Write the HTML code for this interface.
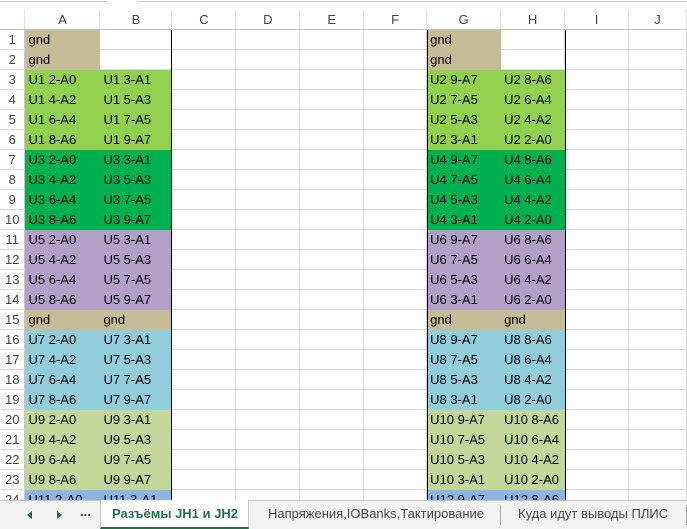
<!DOCTYPE html>
<html><head><meta charset="utf-8"><style>
*{margin:0;padding:0}
body{width:687px;height:528px;overflow:hidden;background:#fff;position:relative;font-family:"Liberation Sans","Noto Sans CJK SC",sans-serif;font-size:13px;color:#000}
table{position:absolute;top:10px;left:0;border-collapse:collapse;table-layout:fixed}
td{height:19px;border-right:1px solid #d9d9d9;border-bottom:1px solid #d9d9d9;padding:0 0 0 3px;white-space:nowrap;overflow:hidden;line-height:19px}
tr.h td{text-align:center;color:#444;padding:0;border-bottom:1px solid #c6c6c6;border-right:1px solid #e0e0e0}
td.n{text-align:center;padding:0;color:#444;border-right:1px solid #c6c6c6}
.t{background:#c4bd97;border-color:#c4bd97}
.lg{background:#92d050;border-color:#92d050}
.g{background:#00b050;border-color:#00b050}
.p{background:#b1a0c7;border-color:#b1a0c7}
.b{background:#92cddc;border-color:#92cddc}
.o{background:#c4d79b;border-color:#c4d79b}
.bb{background:#8db4e2;border-color:#8db4e2}
.vb{position:absolute;width:1px;background:#000}
.tabs{position:absolute;top:500px;left:0;width:687px;height:28px;background:#f3f3f3;border-top:1px solid #c6c6c6;color:#444}
.tabs span{position:absolute;top:5px}
.top{position:absolute;top:0;left:0;width:687px;height:10px;background:#fff}
</style></head><body>
<div class="top"><div style="position:absolute;top:1px;left:0;width:107px;height:1px;background:#c8c8c8"></div><div style="position:absolute;top:1px;left:137px;width:550px;height:1px;background:#c8c8c8"></div></div>
<table>
<colgroup><col style="width:25px"><col style="width:75px"><col style="width:72px"><col style="width:64px"><col style="width:64px"><col style="width:64px"><col style="width:63px"><col style="width:74px"><col style="width:64px"><col style="width:64px"><col style="width:58px"></colgroup>
<tr class="h"><td style="background:#fff"></td><td>A</td><td>B</td><td>C</td><td>D</td><td>E</td><td>F</td><td>G</td><td>H</td><td>I</td><td>J</td></tr>
<tr><td class="n">1</td><td class="t">gnd</td><td></td><td></td><td></td><td></td><td></td><td class="t">gnd</td><td></td><td></td><td></td></tr>
<tr><td class="n">2</td><td class="t">gnd</td><td></td><td></td><td></td><td></td><td></td><td class="t">gnd</td><td></td><td></td><td></td></tr>
<tr><td class="n">3</td><td class="lg">U1 2-A0</td><td class="lg">U1 3-A1</td><td></td><td></td><td></td><td></td><td class="lg">U2 9-A7</td><td class="lg">U2 8-A6</td><td></td><td></td></tr>
<tr><td class="n">4</td><td class="lg">U1 4-A2</td><td class="lg">U1 5-A3</td><td></td><td></td><td></td><td></td><td class="lg">U2 7-A5</td><td class="lg">U2 6-A4</td><td></td><td></td></tr>
<tr><td class="n">5</td><td class="lg">U1 6-A4</td><td class="lg">U1 7-A5</td><td></td><td></td><td></td><td></td><td class="lg">U2 5-A3</td><td class="lg">U2 4-A2</td><td></td><td></td></tr>
<tr><td class="n">6</td><td class="lg">U1 8-A6</td><td class="lg">U1 9-A7</td><td></td><td></td><td></td><td></td><td class="lg">U2 3-A1</td><td class="lg">U2 2-A0</td><td></td><td></td></tr>
<tr><td class="n">7</td><td class="g">U3 2-A0</td><td class="g">U3 3-A1</td><td></td><td></td><td></td><td></td><td class="g">U4 9-A7</td><td class="g">U4 8-A6</td><td></td><td></td></tr>
<tr><td class="n">8</td><td class="g">U3 4-A2</td><td class="g">U3 5-A3</td><td></td><td></td><td></td><td></td><td class="g">U4 7-A5</td><td class="g">U4 6-A4</td><td></td><td></td></tr>
<tr><td class="n">9</td><td class="g">U3 6-A4</td><td class="g">U3 7-A5</td><td></td><td></td><td></td><td></td><td class="g">U4 5-A3</td><td class="g">U4 4-A2</td><td></td><td></td></tr>
<tr><td class="n">10</td><td class="g">U3 8-A6</td><td class="g">U3 9-A7</td><td></td><td></td><td></td><td></td><td class="g">U4 3-A1</td><td class="g">U4 2-A0</td><td></td><td></td></tr>
<tr><td class="n">11</td><td class="p">U5 2-A0</td><td class="p">U5 3-A1</td><td></td><td></td><td></td><td></td><td class="p">U6 9-A7</td><td class="p">U6 8-A6</td><td></td><td></td></tr>
<tr><td class="n">12</td><td class="p">U5 4-A2</td><td class="p">U5 5-A3</td><td></td><td></td><td></td><td></td><td class="p">U6 7-A5</td><td class="p">U6 6-A4</td><td></td><td></td></tr>
<tr><td class="n">13</td><td class="p">U5 6-A4</td><td class="p">U5 7-A5</td><td></td><td></td><td></td><td></td><td class="p">U6 5-A3</td><td class="p">U6 4-A2</td><td></td><td></td></tr>
<tr><td class="n">14</td><td class="p">U5 8-A6</td><td class="p">U5 9-A7</td><td></td><td></td><td></td><td></td><td class="p">U6 3-A1</td><td class="p">U6 2-A0</td><td></td><td></td></tr>
<tr><td class="n">15</td><td class="t">gnd</td><td class="t">gnd</td><td></td><td></td><td></td><td></td><td class="t">gnd</td><td class="t">gnd</td><td></td><td></td></tr>
<tr><td class="n">16</td><td class="b">U7 2-A0</td><td class="b">U7 3-A1</td><td></td><td></td><td></td><td></td><td class="b">U8 9-A7</td><td class="b">U8 8-A6</td><td></td><td></td></tr>
<tr><td class="n">17</td><td class="b">U7 4-A2</td><td class="b">U7 5-A3</td><td></td><td></td><td></td><td></td><td class="b">U8 7-A5</td><td class="b">U8 6-A4</td><td></td><td></td></tr>
<tr><td class="n">18</td><td class="b">U7 6-A4</td><td class="b">U7 7-A5</td><td></td><td></td><td></td><td></td><td class="b">U8 5-A3</td><td class="b">U8 4-A2</td><td></td><td></td></tr>
<tr><td class="n">19</td><td class="b">U7 8-A6</td><td class="b">U7 9-A7</td><td></td><td></td><td></td><td></td><td class="b">U8 3-A1</td><td class="b">U8 2-A0</td><td></td><td></td></tr>
<tr><td class="n">20</td><td class="o">U9 2-A0</td><td class="o">U9 3-A1</td><td></td><td></td><td></td><td></td><td class="o">U10 9-A7</td><td class="o">U10 8-A6</td><td></td><td></td></tr>
<tr><td class="n">21</td><td class="o">U9 4-A2</td><td class="o">U9 5-A3</td><td></td><td></td><td></td><td></td><td class="o">U10 7-A5</td><td class="o">U10 6-A4</td><td></td><td></td></tr>
<tr><td class="n">22</td><td class="o">U9 6-A4</td><td class="o">U9 7-A5</td><td></td><td></td><td></td><td></td><td class="o">U10 5-A3</td><td class="o">U10 4-A2</td><td></td><td></td></tr>
<tr><td class="n">23</td><td class="o">U9 8-A6</td><td class="o">U9 9-A7</td><td></td><td></td><td></td><td></td><td class="o">U10 3-A1</td><td class="o">U10 2-A0</td><td></td><td></td></tr>
<tr><td class="n">24</td><td class="bb">U11 2-A0</td><td class="bb">U11 3-A1</td><td></td><td></td><td></td><td></td><td class="bb">U12 9-A7</td><td class="bb">U12 8-A6</td><td></td><td></td></tr>
</table>
<div class="vb" style="left:171px;top:30px;height:470px"></div>
<div class="vb" style="left:427px;top:30px;height:470px"></div>
<div class="vb" style="left:565px;top:30px;height:470px"></div>
<div class="tabs">
<svg style="position:absolute;left:26px;top:9px" width="8" height="10"><path d="M6 1 L1 5 L6 9 Z" fill="#217346"/></svg>
<svg style="position:absolute;left:55px;top:9px" width="8" height="10"><path d="M2 1 L7 5 L2 9 Z" fill="#217346"/></svg>
<span style="left:80px;top:3px;font-weight:bold;color:#333">...</span>
<div style="position:absolute;left:100px;top:-1px;width:147px;height:27px;background:#fff;border-left:1px solid #c6c6c6;border-right:1px solid #c6c6c6;border-bottom:2px solid #217346"></div>
<span style="left:112px;font-weight:bold;color:#217346">Разъёмы JH1 и JH2</span>
<span style="left:268px">Напряжения,IOBanks,Тактирование</span>
<div style="position:absolute;left:500px;top:4px;width:1px;height:20px;background:#aaa"></div>
<span style="left:518px">Куда идут выводы ПЛИС</span>
<div style="position:absolute;left:686px;top:4px;width:1px;height:20px;background:#aaa"></div>
</div>
</body></html>
